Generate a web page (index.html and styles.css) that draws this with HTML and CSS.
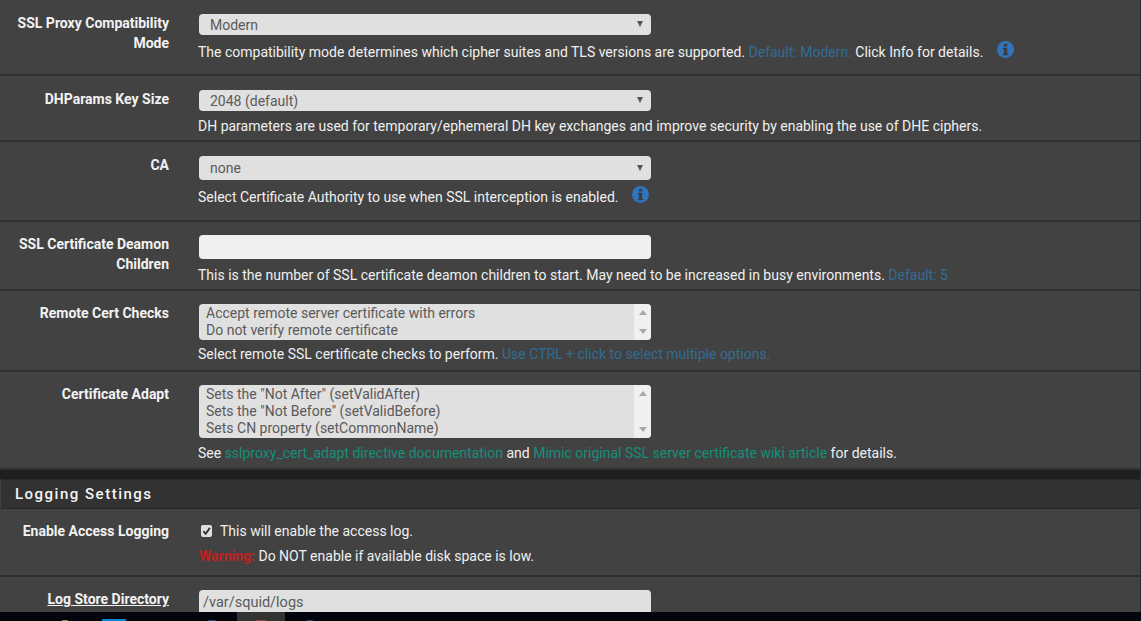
FILE: index.html
```html
<!DOCTYPE html>
<html lang="en">
<head>
<meta charset="utf-8">
<title>Squid SSL settings</title>
<link rel="stylesheet" href="styles.css">
</head>
<body>
<div class="viewport">
  <main class="panel">
    <section class="row r1">
      <div class="lab">SSL Proxy Compatibility Mode</div>
      <div class="field">
        <div class="select s1"><span>Modern</span><i class="caret"></i></div>
        <p class="help">The compatibility mode determines which cipher suites and TLS versions are supported. <span class="muted">Default: Modern.</span> Click Info for details. <svg class="info i1" viewBox="0 0 16 16"><circle cx="8" cy="8" r="8" fill="#2f74bc"/><rect x="6.6" y="2.6" width="3" height="2.6" rx=".5" fill="#3c3c3c"/><path d="M5.6 6.3h4v5.6h1.1v1.6H5.4v-1.6h1.2V7.9h-1z" fill="#3c3c3c"/></svg></p>
      </div>
    </section>
    <section class="row r2">
      <div class="lab">DHParams Key Size</div>
      <div class="field">
        <div class="select s1"><span>2048 (default)</span><i class="caret"></i></div>
        <p class="help">DH parameters are used for temporary/ephemeral DH key exchanges and improve security by enabling the use of DHE ciphers.</p>
      </div>
    </section>
    <section class="row r3">
      <div class="lab">CA</div>
      <div class="field">
        <div class="select s2"><span>none</span><i class="caret"></i></div>
        <p class="help h3">Select Certificate Authority to use when SSL interception is enabled. <svg class="info i2" viewBox="0 0 16 16"><circle cx="8" cy="8" r="8" fill="#2f74bc"/><rect x="6.6" y="2.6" width="3" height="2.6" rx=".5" fill="#3c3c3c"/><path d="M5.6 6.3h4v5.6h1.1v1.6H5.4v-1.6h1.2V7.9h-1z" fill="#3c3c3c"/></svg></p>
      </div>
    </section>
    <section class="row r4">
      <div class="lab">SSL Certificate Deamon Children</div>
      <div class="field">
        <div class="input blank"></div>
        <p class="help">This is the number of SSL certificate deamon children to start. May need to be increased in busy environments. <span class="muted">Default: 5</span></p>
      </div>
    </section>
    <section class="row r5">
      <div class="lab">Remote Cert Checks</div>
      <div class="field">
        <div class="list">
          <div class="opts"><div>Accept remote server certificate with errors</div><div>Do not verify remote certificate</div></div>
          <div class="bar"><i class="up"></i><i class="down"></i></div>
        </div>
        <p class="help">Select remote SSL certificate checks to perform. <span class="muted">Use CTRL + click to select multiple options.</span></p>
      </div>
    </section>
    <section class="row r6">
      <div class="lab">Certificate Adapt</div>
      <div class="field">
        <div class="list">
          <div class="opts"><div>Sets the "Not After" (setValidAfter)</div><div>Sets the "Not Before" (setValidBefore)</div><div>Sets CN property (setCommonName)</div></div>
          <div class="bar"><i class="up"></i><i class="down"></i></div>
        </div>
        <p class="help">See <a class="link">sslproxy_cert_adapt directive documentation</a> and <a class="link">Mimic original SSL server certificate wiki article</a> for details.</p>
      </div>
    </section>
    <div class="gap"></div>
    <h2 class="head">Logging Settings</h2>
    <section class="row r7">
      <div class="lab">Enable Access Logging</div>
      <div class="field">
        <div class="check"><span class="box"><svg viewBox="0 0 12 12"><path d="M2.5 6.2l2.6 2.8 4.6-6.4" fill="none" stroke="#333" stroke-width="2"/></svg></span>This will enable the access log.</div>
        <p class="help warnline"><span class="warn">Warning:</span> Do NOT enable if available disk space is low.</p>
      </div>
    </section>
    <section class="row r8">
      <div class="lab"><u>Log Store Directory</u></div>
      <div class="field">
        <div class="input text">/var/squid/logs</div>
      </div>
    </section>
  </main>
  <footer class="taskbar">
    <i class="tray t-green"></i>
    <i class="tray t-blue"></i>
    <i class="tray t-blue2"></i>
    <span class="active"><i class="tray t-red"></i></span>
    <i class="tray t-blue3"></i>
  </footer>
</div>
</body>
</html>
```
FILE: styles.css
```css
* { box-sizing: border-box; }
html, body { margin: 0; padding: 0; }
body { background: #424242; font-family: Roboto, sans-serif; font-size: 14px; color: #fff; }
.viewport { width: 1141px; height: 621px; overflow: hidden; display: flex; flex-direction: column; }
.panel { height: 612px; overflow: hidden; flex: none; border-right: 1px solid #2b2b2b; }
.taskbar { height: 9px; flex: none; background: #02060c; display: flex; align-items: flex-end; }
.tray { display: block; height: 1px; border-radius: 3px 3px 0 0; }
.t-green { width: 6px; margin-left: 62px; background: #6aa84f; }
.t-blue { width: 24px; height: 2px; margin-left: 34px; background: #0a84d6; border-radius: 0; }
.t-blue2 { width: 8px; margin-left: 82px; background: #1c4f7a; }
.active { width: 48px; height: 9px; margin-left: 21px; background: #333; display: flex; align-items: flex-end; justify-content: center; }
.t-red { width: 10px; background: #8a4a3a; }
.t-blue3 { width: 6px; margin-left: 22px; background: #1c4f6a; }
.row { display: grid; grid-template-columns: 169px 452px; column-gap: 30px; border-bottom: 2px solid #303030; }
.lab { font-weight: 700; text-align: right; line-height: 20px; color: #f2f2f2; }
.field { min-width: 0; }
.select, .input, .list { width: 452px; background: #e0e0e0; border-radius: 4px; color: #5a5a5a; }
.select { height: 21px; display: flex; align-items: center; justify-content: space-between; padding: 0 8px 0 11px; }
.s2 { height: 24px; }
.caret { width: 0; height: 0; border-left: 3px solid transparent; border-right: 3px solid transparent; border-top: 6px solid #555; margin-top: -1px; }
.input { height: 24px; }
.input.blank { background: #f0f0f0; }
.input.text { padding: 3px 4px; line-height: 20px; height: 30px; font-size: 14.5px; }
.help { margin: 0 0 0 -1px; white-space: nowrap; line-height: 20px; font-size: 14px; color: #f0f0f0; }
.muted { color: #316c95; }
.link { color: #12907a; }
.warn { color: #c21f1f; font-weight: 700; }
.info { width: 17px; height: 17px; display: inline-block; vertical-align: -1px; }
.i1 { margin-left: 10px; }
.i2 { margin-left: 10px; }
.r1 { height: 76px; padding-top: 13px; }
.r1 .select { margin-top: 1px; }
.r1 .help { margin-top: 6px; }
.r2 { height: 66px; padding-top: 13px; }
.r2 .select { margin-top: 1px; }
.r2 .help { margin-top: 5px; }
.r3 { height: 80px; padding-top: 13px; }
.r3 .select { margin-top: 1px; }
.r3 .help { margin-top: 6px; }
.r4 { height: 69px; padding-top: 12px; }
.r4 .input { margin-top: 1px; }
.r4 .help { margin-top: 6px; }
.r5 { height: 81px; padding-top: 12px; }
.r5 .list { height: 36px; margin-top: 1px; }
.r5 .help { margin-top: 4px; }
.r6 { height: 98px; padding-top: 12px; }
.r6 .list { height: 53px; margin-top: 1px; }
.r6 .help { margin-top: 5px; }
.list { display: flex; justify-content: space-between; overflow: hidden; }
.opts { padding: 1px 7px; line-height: 17px; }
.bar { width: 17px; background: #f0f0f0; position: relative; display: flex; flex-direction: column; justify-content: space-between; align-items: center; padding: 6px 0; }
.up { width: 0; height: 0; border-left: 4px solid transparent; border-right: 4px solid transparent; border-bottom: 5px solid #a8a8a8; }
.down { width: 0; height: 0; border-left: 4px solid transparent; border-right: 4px solid transparent; border-top: 5px solid #a8a8a8; }
.gap { height: 9px; background: #1e1e1e; }
.head { margin: 0 0 0 1px; height: 30px; padding: 0 14px; background: #323232; border-top: 1px solid #272727; border-bottom: 1px solid #272727; font-size: 15px; font-weight: 500; letter-spacing: 1.5px; line-height: 29px; color: #f4f4f4; }
.r7 { height: 68px; padding-top: 12px; }
.check { line-height: 20px; display: flex; align-items: center; color: #f0f0f0; }
.box { width: 11px; height: 12px; margin: 0 8px 0 2px; background: #e0e0e0; border-radius: 2px; display: inline-flex; }
.box svg { width: 11px; height: 12px; }
.warnline { margin: 5px 0 0; }
.r8 { border-bottom: 0; padding-top: 12px; }
.r8 .input { margin-top: 1px; }
```
